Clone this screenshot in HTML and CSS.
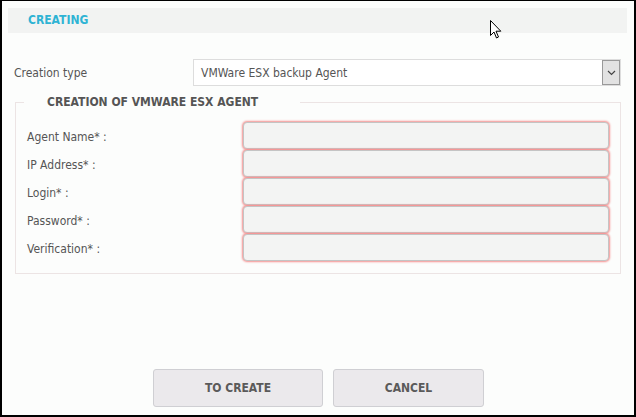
FILE: index.html
```html
<!DOCTYPE html>
<html>
<head>
<meta charset="utf-8">
<link rel="stylesheet" href="styles.css">
</head>
<body>
<div class="frame">
  <div class="header">CREATING</div>
  <div class="type-row">
    <span class="type-label">Creation type</span>
    <div class="select">
      <span class="select-text">VMWare ESX backup Agent</span>
      <span class="select-btn">
        <svg width="9" height="6" viewBox="0 0 9 6"><path d="M1 1 L4.5 4.5 L8 1" fill="none" stroke="#444" stroke-width="1.2"/></svg>
      </span>
    </div>
  </div>
  <fieldset class="group">
    <legend>CREATION OF VMWARE ESX AGENT</legend>
    <div class="row"><label>Agent Name* :</label><div class="input"></div></div>
    <div class="row"><label>IP Address* :</label><div class="input"></div></div>
    <div class="row"><label>Login* :</label><div class="input"></div></div>
    <div class="row"><label>Password* :</label><div class="input"></div></div>
    <div class="row"><label>Verification* :</label><div class="input"></div></div>
  </fieldset>
  <div class="actions">
    <button class="btn btn-create">TO CREATE</button>
    <button class="btn btn-cancel">CANCEL</button>
  </div>
  <svg class="cursor" width="12" height="19" viewBox="0 0 12 19"><path d="M0.5 0.5 L0.5 15.5 L4 12 L6.5 18 L8.5 17 L6 11.2 L10.8 11.2 Z" fill="#fff" stroke="#000" stroke-width="1"/></svg>
</div>
</body>
</html>
```

FILE: styles.css
```css
html, body {
  margin: 0;
  padding: 0;
}
body {
  width: 636px;
  height: 417px;
  font-family: "DejaVu Sans Condensed", "DejaVu Sans", sans-serif;
  font-size: 12px;
  color: #555;
}
.frame {
  position: relative;
  box-sizing: border-box;
  width: 636px;
  height: 417px;
  border-top: 1px solid #000;
  border-left: 2px solid #000;
  border-right: 2px solid #000;
  border-bottom: 2px solid #000;
  background: #fcfdfc;
  padding: 7px 7px 0 6px;
}
.header {
  height: 25px;
  background: #f2f3f2;
  color: #2fb3d4;
  font-weight: bold;
  font-size: 12px;
  line-height: 24px;
  padding-left: 20px;
}
.type-row {
  display: flex;
  align-items: center;
  margin-top: 26px;
  padding-left: 6px;
  padding-right: 6px;
  height: 27px;
}
.type-label {
  width: 179px;
  color: #555;
}
.select {
  flex: 1;
  height: 25px;
  border: 1px solid #ddd;
  background: #fff;
  display: flex;
  align-items: center;
  justify-content: space-between;
  padding-left: 7px;
  color: #555;
}
.select-btn {
  width: 16px;
  height: 23px;
  border: 1px solid #999;
  background: #e2e2e2;
  display: flex;
  align-items: center;
  justify-content: center;
}
.group {
  margin: 9px 6px 0 7px;
  border: 1px solid #ece4e4;
  padding: 12px 10px 12px 11px;
}
.group legend {
  font-weight: bold;
  color: #555;
  padding: 0 42px 0 23px;
  margin-left: -3px;
}
.row {
  display: flex;
  align-items: center;
  height: 28px;
}
.row label {
  width: 216px;
  padding-top: 3px;
  color: #555;
}
.input {
  box-sizing: border-box;
  width: 366px;
  height: 27px;
  background: #f3f4f3;
  border: 1px solid #c4c4c4;
  border-radius: 4px;
  box-shadow: 0 0 2px 1px #f59090;
}
.actions {
  display: flex;
  justify-content: center;
  gap: 10px;
  margin-top: 95px;
  padding-left: 2px;
}
.btn {
  height: 38px;
  border: 1px solid #cfcfd3;
  border-radius: 3px;
  background: #ebe9ec;
  font-family: "DejaVu Sans Condensed", "DejaVu Sans", sans-serif;
  font-weight: bold;
  font-size: 12px;
  color: #5a5a5a;
}
.btn-create { width: 170px; }
.btn-cancel { width: 151px; }
.cursor {
  position: absolute;
  left: 488px;
  top: 19px;
}
```
